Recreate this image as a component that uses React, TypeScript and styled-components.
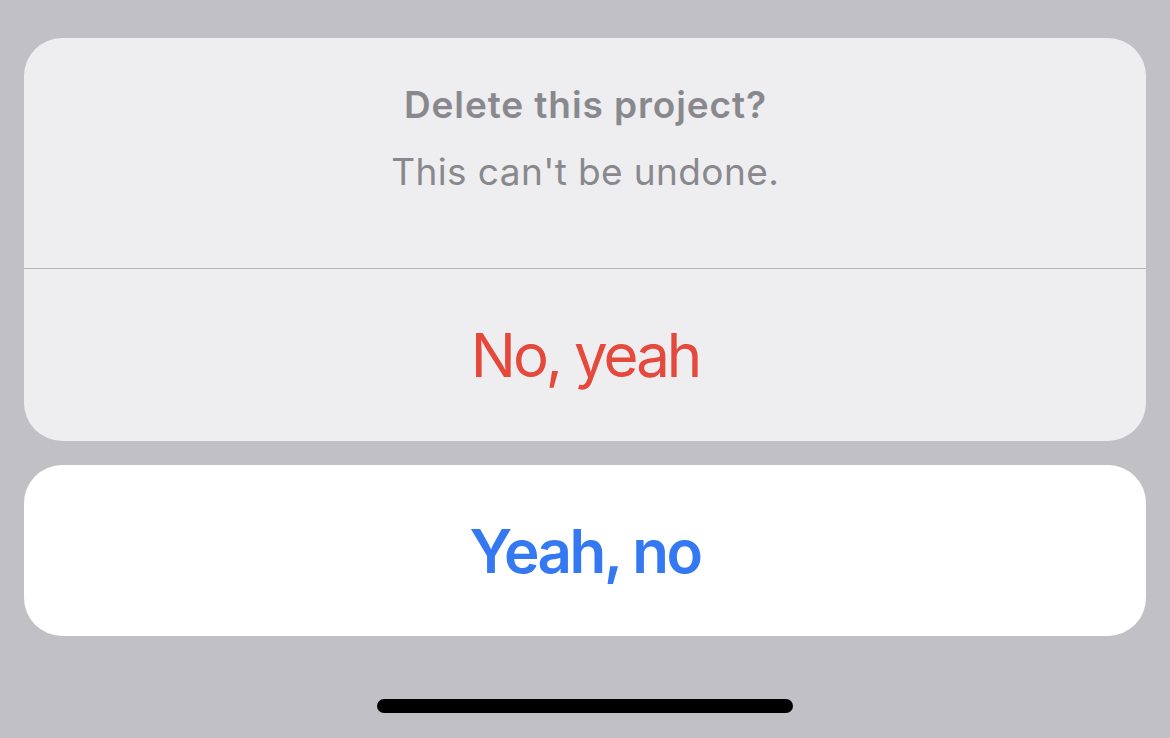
import React from "react";
import styled, { createGlobalStyle } from "styled-components";

const Global = createGlobalStyle`
  html, body { margin: 0; padding: 0; background: #c1c0c5; }
  body { font-family: Inter, "Noto Sans", sans-serif; -webkit-font-smoothing: antialiased; }
`;

const Screen = styled.div`
  width: 1170px;
  height: 738px;
  box-sizing: border-box;
  padding: 38px 24px 0;
  display: flex;
  flex-direction: column;
  align-items: stretch;
  background: #c1c0c5;
  overflow: hidden;
`;

const AlertCard = styled.div`
  background: #eeeef0;
  border-radius: 38px;
  display: flex;
  flex-direction: column;
  overflow: hidden;
`;

const Header = styled.div`
  height: 231px;
  box-sizing: border-box;
  padding-top: 45px;
  display: flex;
  flex-direction: column;
  align-items: center;
  gap: 23px;
  border-bottom: 1px solid #b5b5b9;
`;

const Title = styled.div`
  font-size: 37px;
  line-height: 44px;
  font-weight: 600;
  letter-spacing: 0.9px;
  padding-left: 0.9px;
  color: #89898d;
`;

const Message = styled.div`
  font-size: 37px;
  line-height: 44px;
  font-weight: 400;
  letter-spacing: 0.4px;
  padding-left: 0.4px;
  color: #89898d;
`;

const ActionButton = styled.button<{ $tone: "destructive" | "cancel" }>`
  all: unset;
  box-sizing: border-box;
  height: ${(p) => (p.$tone === "cancel" ? "171px" : "172px")};
  display: flex;
  align-items: center;
  justify-content: center;
  font-family: Inter, "Noto Sans", sans-serif;
  font-size: 60px;
  line-height: 72px;
  font-weight: ${(p) => (p.$tone === "cancel" ? 600 : 400)};
  letter-spacing: ${(p) => (p.$tone === "cancel" ? "-2.4px" : "-3px")};
  color: ${(p) => (p.$tone === "cancel" ? "#3479f2" : "#e5493c")};
  cursor: pointer;
`;

const CancelCard = styled.div`
  margin-top: 24px;
  background: #ffffff;
  border-radius: 38px;
  display: flex;
  flex-direction: column;
  overflow: hidden;
`;

const HomeIndicator = styled.div`
  align-self: center;
  margin-top: 63px;
  width: 416px;
  height: 14px;
  border-radius: 7px;
  background: #000000;
`;

export default function App() {
  return (
    <>
      <Global />
      <Screen>
        <AlertCard>
          <Header>
            <Title>Delete this project?</Title>
            <Message>This can't be undone.</Message>
          </Header>
          <ActionButton $tone="destructive">No, yeah</ActionButton>
        </AlertCard>
        <CancelCard>
          <ActionButton $tone="cancel">Yeah, no</ActionButton>
        </CancelCard>
        <HomeIndicator />
      </Screen>
    </>
  );
}
